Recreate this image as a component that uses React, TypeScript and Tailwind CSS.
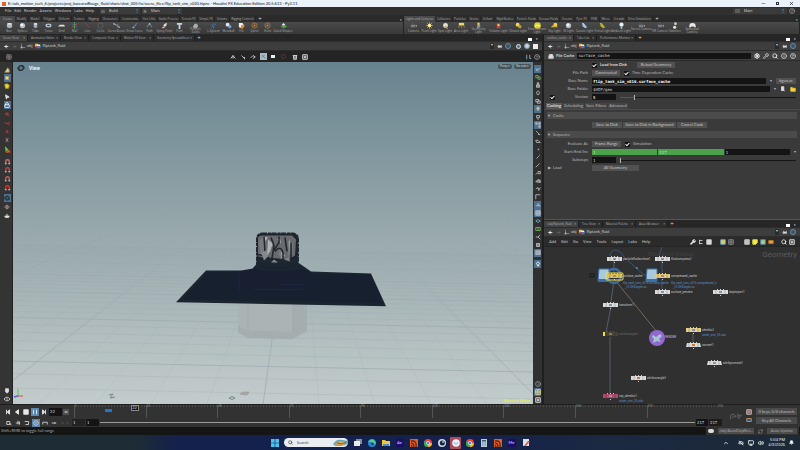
import type { ReactNode } from "react";
import {
  ArrowLeft,
  ArrowRight,
  Bell,
  Check,
  ChevronUp,
  Grid3x3,
  Info,
  CircleHelp,
  List,
  Lock,
  Minus,
  Monitor,
  MousePointer2,
  Pin,
  RefreshCw,
  Search,
  Settings,
  Volume2,
  Wrench,
  X,
} from "lucide-react";

const CREATE_TABS: [string, string][] = [
  ["Create", "w-[15px]"],
  ["Modify", "w-[14px]"],
  ["Model", "w-[13px]"],
  ["Polygon", "w-[15px]"],
  ["Deform", "w-[15px]"],
  ["Texture", "w-[15px]"],
  ["Rigging", "w-[14px]"],
  ["Characters", "w-[19px]"],
  ["Constraints", "w-[21px]"],
  ["Hair Utils", "w-[17px]"],
  ["Guide Process", "w-[22px]"],
  ["Terrain FX", "w-[18px]"],
  ["Simple FX", "w-[17px]"],
  ["Volume", "w-[15px]"],
  ["Rigging Controls", "w-[26px]"],
];

const LIGHT_TABS: [string, string][] = [
  ["Lights and Cameras", "w-[31px]"],
  ["Collisions", "w-[18px]"],
  ["Particles", "w-[15px]"],
  ["Grains", "w-[13px]"],
  ["Vellum", "w-[14px]"],
  ["Rigid Bodies", "w-[21px]"],
  ["Particle Fluids", "w-[22px]"],
  ["Viscous Fluids", "w-[22px]"],
  ["Oceans", "w-[15px]"],
  ["Pyro FX", "w-[14px]"],
  ["FEM", "w-[11px]"],
  ["Wires", "w-[12px]"],
  ["Crowds", "w-[15px]"],
  ["Drive Simulation", "w-[26px]"],
];

type Shape =
  | "box" | "ball" | "tube" | "torus" | "grid" | "null" | "line" | "circle"
  | "curve" | "pen" | "path" | "spray" | "font" | "solid" | "tree" | "meta"
  | "flame" | "spiral" | "shapes" | "camera" | "sun" | "lamp" | "area"
  | "geo" | "volume" | "env" | "sky" | "beam" | "bulb" | "switch" | "pad";

const CREATE_TOOLS: [string, Shape, string][] = [
  ["Box", "box", "w-[14px]"],
  ["Sphere", "ball", "w-[13px]"],
  ["Tube", "tube", "w-[13px]"],
  ["Torus", "torus", "w-[13px]"],
  ["Grid", "grid", "w-[13px]"],
  ["Null", "null", "w-[13px]"],
  ["Line", "line", "w-[13px]"],
  ["Circle", "circle", "w-[13px]"],
  ["Curve Bezier", "curve", "w-[19px]"],
  ["Draw Curve", "pen", "w-[17px]"],
  ["Path", "path", "w-[13px]"],
  ["Spray Paint", "spray", "w-[17px]"],
  ["Font", "font", "w-[13px]"],
  ["Platonic Solids", "solid", "w-[19px]"],
  ["L-System", "tree", "w-[17px]"],
  ["Metaball", "meta", "w-[13px]"],
  ["File", "flame", "w-[13px]"],
  ["Spiral", "spiral", "w-[13px]"],
  ["Helix", "spiral", "w-[13px]"],
  ["Quick Shapes", "shapes", "w-[18px]"],
];

const LIGHT_TOOLS: [string, Shape, string][] = [
  ["Camera", "camera", "w-[15px]"],
  ["Point Light", "sun", "w-[16px]"],
  ["Spot Light", "lamp", "w-[16px]"],
  ["Area Light", "area", "w-[16px]"],
  ["Geometry Light", "geo", "w-[19px]"],
  ["Volume Light", "volume", "w-[21px]"],
  ["Distant Light", "meta", "w-[18px]"],
  ["Environment Light", "env", "w-[20px]"],
  ["Sky Light", "sky", "w-[15px]"],
  ["GI Light", "ball", "w-[13px]"],
  ["Caustic Light", "beam", "w-[19px]"],
  ["Portal Light", "beam", "w-[17px]"],
  ["Ambient Light", "bulb", "w-[20px]"],
  ["Stereo Camera", "camera", "w-[21px]"],
  ["VR Camera", "camera", "w-[16px]"],
  ["Switcher", "switch", "w-[14px]"],
  ["Gamepad Camera", "pad", "w-[20px]"],
];

function ToolGlyph({ shape, warm }: { shape: Shape; warm?: boolean }) {
  const body: Record<Shape, ReactNode> = {
    box: <><path d="M1 2l3-1 3 1v4l-3 1-3-1z" fill="#aeb9bf" /><path d="M1 2l3 1 3-1-3-1z" fill="#eef3f5" /></>,
    ball: <><circle cx="4" cy="4" r="3" fill="#b8c4ca" /><circle cx="3.300" cy="3.200" r="1.500" fill="#f2f6f7" /></>,
    tube: <><path d="M2 2v4q2 1.500 4 0V2z" fill="#9fb2bd" /><ellipse cx="4" cy="2" rx="2" ry="1" fill="#e8eef1" /></>,
    torus: <ellipse cx="4" cy="4" rx="2.700" ry="1.500" fill="none" stroke="#b9c7d0" strokeWidth="1.500" />,
    grid: <path d="M0 5l2-2h5l1 2z" fill="#d9dfe2" />,
    null: <><path d="M4 0v8" stroke="#4caf4f" /><path d="M1 6l6-4" stroke="#d44" /><path d="M1 2l6 4" stroke="#46d" /></>,
    line: <path d="M1 1l6 6" stroke="#8a4b4b" strokeWidth=".8" />,
    circle: <circle cx="4" cy="4" r="3" fill="none" stroke="#62686c" strokeWidth=".8" />,
    curve: <><path d="M0 2q3 0 4 2t4 2" fill="none" stroke="#d5dade" /><path d="M3 4l3-2v4z" fill="#5b86b5" /></>,
    pen: <><path d="M2 7l4-6 1 1-4 5z" fill="#5d88b8" /><path d="M1 7l2-2 1 1z" fill="#ddd" /></>,
    path: <><path d="M1 6l3-4 3 4" fill="none" stroke="#5d88b8" strokeWidth="1.200" /><circle cx="4" cy="2" r="1" fill="#d7bc4c" /></>,
    spray: <><path d="M1 7l3-5 3-1-1 3-3 3z" fill="#e6dfdf" /><path d="M1 7l2-3 1 1z" fill="#c44" /></>,
    font: <path d="M1 1h6v2H5v5H3V3H1z" fill="#c5d4dc" />,
    solid: <path d="M1 5l2-3 3 0 1 3-2 2H2z" fill="#a9acae" />,
    tree: <><path d="M4 8V3M4 5L1 3M4 4l3-2M1 7l6-5" stroke="#3f76a8" strokeWidth=".9" /><circle cx="4" cy="3" r="1.500" fill="#2d5f91" /></>,
    meta: <><circle cx="3" cy="3" r="2.200" fill={warm ? "#f3d94a" : "#dbe8f4"} /><circle cx="5.500" cy="5.300" r="1.900" fill={warm ? "#c9a522" : "#6ea2dd"} /></>,
    flame: <><path d="M1 1h4l2 3-3 3-3-1z" fill="#f0f0ea" /><path d="M4 3l4 1-3 4-2-2z" fill="#e08b32" /></>,
    spiral: <><circle cx="4" cy="4" r="3" fill="none" stroke="#b77a38" strokeWidth="1" /><circle cx="4" cy="4" r="1.200" fill="#c98f44" /></>,
    shapes: <><path d="M1 5l3-3 4 3-4 2z" fill="#49a651" /><path d="M2 3l2-2 2 2-2 1z" fill="#e9e9e2" /><path d="M1 6l2-1v2z" fill="#c33" /></>,
    camera: <><rect x="1" y="3" width="5" height="3" fill="#777e82" /><circle cx="3" cy="2" r="1.300" fill="#555" /><path d="M6 4l2-1v3z" fill="#999" /></>,
    sun: <><path d="M4 0v8M0 4h8M1 1l6 6M7 1L1 7" stroke="#d8be4d" strokeWidth=".7" /><circle cx="4" cy="4" r="2" fill="#fff0a0" /></>,
    lamp: <><circle cx="4" cy="4" r="2.800" fill="#e4e4da" /><path d="M4 4l3 3-1 1-3-3z" fill="#b99a3d" /></>,
    area: <><path d="M1 1h6v3H1z" fill="#efd857" /><path d="M1 4v3M4 4v3M7 4v3" stroke="#b9a24b" strokeWidth=".7" /></>,
    geo: <><path d="M2 7l1-5 3 1v3z" fill="#8a9bb5" /><circle cx="4" cy="2" r="1.400" fill="#eec453" /></>,
    volume: <><path d="M2 2q2-2 4 0v5H2z" fill="#cf3f34" /><circle cx="4" cy="3.500" r="1.300" fill="#f6cf58" /></>,
    env: <><circle cx="4" cy="4" r="3.800" fill="#d8cf35" /><path d="M1 5q3-3 6 0" fill="none" stroke="#fff" /></>,
    sky: <><circle cx="5" cy="3" r="2.200" fill="#f4d43f" /><path d="M0 6q2-4 4-1 2-1 4 1z" fill="#d9b33a" /></>,
    beam: <path d="M1 1h2l4 5-2 1-3-2z" fill={warm ? "#b9b42e" : "#a7c4e2"} />,
    bulb: <><circle cx="4" cy="3" r="2.400" fill="#e4f2f5" /><path d="M3 5h2v3H3z" fill="#9eb9c2" /></>,
    switch: <><circle cx="4" cy="2" r="1.600" fill="#ccc" /><circle cx="3" cy="6" r="1.800" fill="#e4e4e4" /></>,
    pad: <path d="M1 2q3-2 6 0l1 4H6L5 5H3L2 6H0z" fill="#e6e6e6" />,
  };
  return (
    <svg viewBox="0 0 8 8" className="size-[7px] shrink-0">
      {body[shape]}
    </svg>
  );
}

function Shelf({
  tabs,
  tools,
  warm,
}: {
  tabs: [string, string][];
  tools: [string, Shape, string][];
  warm?: boolean;
}) {
  return (
    <div className="min-w-0 border-r border-[#242424] bg-[#404040]">
      <div className="flex h-[7px] items-end bg-[#2a2a2a] text-[3px] text-[#b0b0b0]">
        {tabs.map(([name, w], i) => (
          <button
            key={name}
            className={`${w} h-[6px] shrink-0 whitespace-nowrap text-center ${
              i === 0 ? "bg-[#484848]" : "border-r border-[#242424] bg-[#2e2e2e]"
            }`}
          >
            {name}
          </button>
        ))}
        <button className="w-2 text-[6px] text-[#ddd]">+</button>
        <span className="ml-auto pr-px text-[#ddd]">▾</span>
      </div>
      <div className="flex h-3 items-start bg-linear-to-b from-[#4a4a4a] to-[#393939] pl-0.5 text-[3px] text-[#adadad]">
        {tools.map(([name, shape, w]) => {
          const twoLine = /^(Platonic|Geometry|Environment|Stereo|Gamepad)/.test(name);
          return (
            <button key={name} className={`${w} flex shrink-0 flex-col items-center`}>
              <ToolGlyph shape={shape} warm={warm && !name.startsWith("Caustic")} />
              <span className={twoLine ? "-mt-px text-center" : "whitespace-nowrap pt-px"}>{name}</span>
            </button>
          );
        })}
      </div>
    </div>
  );
}

function PaneTabs({ tabs }: { tabs: [string, string][] }) {
  return (
    <div className="flex h-[7px] items-end bg-[#262626] font-['Open_Sans','Liberation_Sans',sans-serif] text-[3px] text-[#b4b4b4]">
      {tabs.map(([name, w], i) => (
        <button
          key={name}
          className={`${w} flex h-[6px] shrink-0 items-center justify-between whitespace-nowrap border-r border-[#1d1d1d] pl-[3px] pr-0.5 ${
            i === 0 ? "bg-[#424242]" : "bg-[#2d2d2d]"
          }`}
        >
          {name}
          <span className="text-[#ccc]">×</span>
        </button>
      ))}
      <button className="w-2 text-[6px] text-[#ddd]">+</button>
      <span className="ml-auto flex items-center gap-1 pr-1 text-[#eee]">
        <i className="block h-[3px] w-1 bg-white" />▾
      </span>
    </div>
  );
}

function PathBar({ wide }: { wide?: boolean }) {
  return (
    <div className="flex h-[10px] items-center gap-[3px] border-y border-[#2c2c2c] bg-[#3d3d3d] px-1 text-[4px] text-[#cacaca]">
      <ArrowLeft className="size-[5px] text-white" strokeWidth={4} />
      <ArrowRight className="size-[5px] text-[#666]" strokeWidth={3} />
      <a href="#obj" className="flex items-center gap-px">
        <svg viewBox="0 0 8 8" className="size-[6px]">
          <path d="M2 1v5h5" fill="none" stroke="#8299ad" />
          <circle cx="2" cy="6" r="1.200" fill="#b3c3d0" />
        </svg>
        obj
      </a>
      <a href="#fluid" className="flex items-center gap-px">
        <svg viewBox="0 0 8 8" className="size-[6px]">
          <path d="M0 1h4v4H0z" fill="#e7c23a" />
          <path d="M3 2h4v4H3z" fill="#eee" />
          <path d="M1 4h3v3H1z" fill="#c93a31" />
          <path d="M4 4h3v3H4z" fill="#4079c9" />
        </svg>
        fliptank_fluid
      </a>
      <span className="ml-auto h-[6px] w-1 bg-[#2a2a2a] text-center">▾</span>
      <Pin className="size-[5px] rotate-90 text-[#ddd]" fill="#ddd" />
      <span className="size-[6px] rounded-full border border-[#6d8aa3] bg-[#3a526a]" />
      {wide && (
        <>
          <span className="ml-0.5 size-[5px] rounded-full border border-[#d6e1ea] bg-[#55748f]" />
          <span className="size-[6px] rounded-full border border-[#7b98b0] bg-[#c8d5df]" />
          <span className="size-[5px] bg-[#eeeeee]" />
        </>
      )}
    </div>
  );
}

function SideButton({ on, label, children }: { on?: boolean; label: string; children?: ReactNode }) {
  return (
    <button
      aria-label={label}
      className={`flex h-2 w-[7px] shrink-0 items-center justify-center ${on ? "bg-[#4f6f8c]" : ""}`}
    >
      {children}
    </button>
  );
}

function Glyph({ d, color = "#cfcfcf", fill = "none" }: { d: string; color?: string; fill?: string }) {
  return (
    <svg viewBox="0 0 8 8" className="size-[6px]">
      <path d={d} stroke={color} fill={fill} strokeWidth="1.200" />
    </svg>
  );
}

function SnapGlyph({ color }: { color: string }) {
  return (
    <svg viewBox="0 0 8 8" className="size-[7px]">
      <path d="M2 6V4a2 2 0 0 1 4 0v2" fill="none" stroke={color} strokeWidth="1.500" />
      <path d="M1 6h2v1H1zM5 6h2v1H5z" fill="#ddd" />
    </svg>
  );
}

function LeftTools() {
  return (
    <aside className="flex w-[13px] shrink-0 flex-col items-center border-r border-[#222] bg-[#343434] pb-px pl-0.5 pt-1">
      <SideButton label="Select objects"><Glyph d="M1 7h6V4L5 1 3 4z" color="#8f8a6c" fill="#e6d98a" /></SideButton>
      <SideButton label="Select geometry" on><Glyph d="M2 2h4v4H2z" color="#b5a065" fill="#eedb96" /></SideButton>
      <SideButton label="Select dynamics"><Glyph d="M1 2l3-1 3 2-1 4H2z" color="#b5a022" fill="#e9d63a" /></SideButton>
      <div className="h-[3px]" />
      <SideButton label="Arrow"><MousePointer2 className="size-[6px] rotate-12 text-white" fill="#ddd" /></SideButton>
      <SideButton label="Lock" on><Lock className="size-[6px] text-white" strokeWidth={3} /></SideButton>
      <div className="h-px" />
      <SideButton label="Move"><Glyph d="M2 3h4L4 6zM6 5l1 2" color="#c03a3e" fill="#7d2c30" /></SideButton>
      <div className="h-px" />
      <SideButton label="Rotate"><Glyph d="M1 3q3 4 6 0M6 5l1 2" color="#d03a32" /></SideButton>
      <div className="h-px" />
      <SideButton label="Scale"><Glyph d="M3 2h2v3H3zM6 6l1 1" color="#ac383c" fill="#5e2f33" /></SideButton>
      <SideButton label="Pose"><Glyph d="M2 2l4 4M6 2L2 6M4 1v6" color="#9d7a7a" /></SideButton>
      <div className="h-px" />
      <SideButton label="Handles">
        <svg viewBox="0 0 8 8" className="size-[7px]">
          <path d="M1 0l1 7 3-3z" fill="#6ec44e" />
          <path d="M2 8l3-4 3 3z" fill="#d8562c" />
        </svg>
      </SideButton>
      <div className="h-1" />
      <SideButton label="Snap grid"><SnapGlyph color="#c86f6f" /></SideButton>
      <SideButton label="Snap curve"><SnapGlyph color="#bb4848" /></SideButton>
      <div className="h-px" />
      <SideButton label="Snap point"><SnapGlyph color="#c86060" /></SideButton>
      <div className="h-px" />
      <SideButton label="Snap multi"><SnapGlyph color="#e03030" /></SideButton>
      <div className="h-[3px]" />
      <SideButton label="View tool" on><Glyph d="M1 3l3-2 3 2v3L4 7 1 5z" color="#20272d" fill="#40515e" /></SideButton>
      <div className="h-px" />
      <SideButton label="Render region"><Glyph d="M1 4q3-5 6 0-3 5-6 0M3 3h2v2H3z" color="#a38d8d" /></SideButton>
      <div className="h-px" />
      <SideButton label="Flipbook"><Glyph d="M1 4h6L6 6H2zM4 1v3" color="#cfd7d2" fill="#eee" /></SideButton>
      <div className="flex-1" />
      <SideButton label="Ghost"><Glyph d="M2 1h4v4L4 7 2 5z" fill="#ddd" /></SideButton>
      <SideButton label="Visibility"><Glyph d="M0 4q4-5 8 0-4 5-8 0M3 4h2" /></SideButton>
    </aside>
  );
}

const DISPLAY_TOOLS: [string, string, boolean][] = [
  ["Grid plane", "M1 6l6-3M1 3l3 4", true],
  ["Materials", "M1 2h3v3H1zM4 4h3v3H4z", false],
  ["Lock camera", "M2 4h4v3H2zM3 4V1h2v3", false],
  ["Headlight", "M2 3q2-4 4 0L5 6H3z", false],
  ["Shaded", "M1 2h4v3H1zM3 4h4v3H3z", false],
  ["Lighting", "M2 3q2-4 4 0L4 6z", true],
  ["High quality", "M2 2h4v3H2zM4 5v3", false],
  ["Guides", "M1 1h2v2H1zM5 5h2v2H5zM5 1h2v2H5z", true],
  ["Object name", "M1 1l5 5M4 6h3", false],
  ["Follow", "M1 3h3l3 3H2z", false],
  ["Points", "M4 4h1v1H4z", false],
  ["Normals", "M2 6l3-3M6 1v1", false],
  ["Vectors", "M1 7l5-5", false],
  ["Numbers", "M1 6l2-2M4 2h3v3H4z", false],
  ["Prims", "M1 5l3-3 3 1v3z", false],
  ["Hulls", "M1 4l3-2 1 4 2-4", false],
  ["Bounds", "M1 7V1h6", false],
  ["Profiles", "M1 5h3V2l3 4", true],
  ["Backgrounds", "M1 1h6v6H1zM1 4h6", true],
  ["Diamonds", "M1 4l3-2 3 2-3 2z", false],
  ["Field", "M1 2h6v4H1zM4 2v4", false],
  ["Connect", "M1 4h3l3-3M4 4l3 3", false],
  ["Stop", "M2 2h4v4H2z", false],
  ["Image", "M1 1h6v5H1zM2 5l3-3", true],
];

function DisplayTools() {
  return (
    <aside className="flex w-[9px] shrink-0 flex-col items-center bg-[#303030] pt-[3px]">
      {DISPLAY_TOOLS.map(([label, d, on], i) => (
        <SideButton key={label} label={label} on={on}>
          <Glyph
            d={d}
            color={i === 1 || i === 20 ? "#6fae55" : i === 5 ? "#e9c869" : i === 19 ? "#6ca5c4" : "#b3b7ba"}
            fill={on || i === 22 || i === 14 || i === 2 ? "#ffffff66" : "none"}
          />
        </SideButton>
      ))}
      <div className="h-[3px]" />
      <SideButton label="Drop pin" on><Glyph d="M2 3q2-4 4 0L4 7z" color="#fff" /></SideButton>
      <div className="flex-1" />
      <SideButton label="Info"><Info className="size-[6px] text-[#ccc]" /></SideButton>
      <SideButton label="Layout" on><Glyph d="M1 1h6v6H1zM4 1v6M1 4h6" color="#f1df91" /></SideButton>
      <SideButton label="Display options"><Glyph d="M1 1h6v6H1zM3 3h2v2H3z" color="#eee" /></SideButton>
    </aside>
  );
}

function Viewport() {
  // ground plane: one family fans out from the vanishing point, the other runs across
  const fan = Array.from({ length: 61 }, (_, i) => (i - 30) * 56);
  const across = Array.from({ length: 38 }, (_, i) => 130 + 4200 / (72 - i * 1.6));
  return (
    <div className="relative min-w-0 flex-1 overflow-hidden bg-linear-to-b from-[#67838f] via-[#94a5a9] via-45% to-[#c3cccc]">
      <svg viewBox="0 0 520 343" preserveAspectRatio="none" className="absolute inset-0 size-full">
        <defs>
          <linearGradient id="fade" x1="0" y1="0" x2="0" y2="1">
            <stop offset=".42" stopColor="#fff" stopOpacity="0" />
            <stop offset=".55" stopColor="#fff" stopOpacity=".5" />
            <stop offset="1" stopColor="#fff" stopOpacity=".85" />
          </linearGradient>
          <mask id="ground">
            <rect width="520" height="343" fill="url(#fade)" />
          </mask>
        </defs>
        <g mask="url(#ground)" stroke="#90a3a8" fill="none">
          {fan.map((dx, i) => (
            <path key={dx} d={`M285 95L${250 + dx} 343`} strokeWidth={i % 5 === 0 ? 0.7 : 0.2} />
          ))}
          {across.map((y, i) => (
            <path key={y} d={`M0 ${y - 5}L520 ${y + 6}`} strokeWidth={i % 5 === 0 ? 0.7 : 0.3} />
          ))}
        </g>
        <path d="M225 238h69v32l-15 8-44-1-10-6z" fill="#a4adaf" />
        <path d="M225 238h55v34l-45-1-10-6z" fill="#abb3b4" />
        <path d="M235 238v32M280 240v31l-45-1-10-5" fill="none" stroke="#9ba6a8" strokeWidth=".5" />
        <path
          d="M193 209h45l6-7V178q0-6 6-6h30q5 0 5 6v23l13 9 60 2 15 33-210-4z"
          fill="#1c2430"
        />
        <path d="M194 211l163 2 13 29-200-4z" fill="#17202e" />
        <path d="M225 210q35-9 72 0l4 10-6 12-72-1-3-10z" fill="#171f31" />
        <path d="M226 231v-20M240 228h50M268 223h22" stroke="#1d2742" strokeWidth="1" />
        <path d="M245 177q0-3 4-3h30l4 4-1 16-7 4-30-3z" fill="#686a6d" />
        <path d="M246 180l3-4 4 4 1 11-6 5zM275 180l5 1-1 12-4 1zM267 186l4 5-3 7-3-6z" fill="#77797b" />
        <path d="M250 175l5 1-3 4zM255 178l5 4-3 8-3 4zM268 190l4 4-3 4zM276 178l2 4-1 9zM264 178l3-1 1 5z" fill="#aeb2b5" />
        <path
          d="M251 175l1 15-2 9M258 176l3 8-2 13M266 175v6l-5 8M272 176l2 14M262 190q5-7 8 1v9M278 181v17M245 193l9 2 9 8M246 200h37"
          fill="none"
          stroke="#222831"
          strokeWidth="1.6"
        />
        <path d="M248 191l5-2 2 6-4 4zM271 198l5-2 1 4zM258 201l3-3 4 3z" fill="#85888b" />
        <rect x="244" y="172" width="41" height="36" rx="5" fill="none" stroke="#202630" strokeWidth="2" strokeDasharray="5 1 3 .5" />
        <path d="M96 334l4-1-3 4 5-1M216 337q3-3 6 0-3 3-6 0" fill="none" stroke="#758690" />
        <path d="M227 333l3-2h6l-2 3z" fill="#aaa9a6" stroke="#8b8c8b" strokeWidth=".5" />
        <path d="M5 335v-7" stroke="#54c451" />
        <path d="M5 335h5" stroke="#c9534d" />
        <path d="M5 335l-4 1" stroke="#4f63d2" strokeWidth="1.5" />
      </svg>
      <div className="absolute left-1 top-0.5 flex items-center gap-1 font-['Roboto',sans-serif] text-[5px] font-bold text-[#eef4f6]">
        <svg viewBox="0 0 8 8" className="size-2">
          <path d="M0 4l3-3 3 0 2 3-3 3-3 0z" fill="#26323a" />
          <path d="M2 4l2-2 2 2-2 2z" fill="#687d88" />
        </svg>
        View
      </div>
      <div className="absolute right-0.5 top-[2px] flex gap-0.5 text-[3px] text-[#d2dadd]">
        <button className="h-[5px] w-[14px] rounded-full bg-[#44525a]">Persp ▾</button>
        <button className="h-[5px] w-[17px] rounded-full bg-[#44525a]">No cam ▾</button>
      </div>
      <div className="absolute bottom-px right-[3px] font-['Open_Sans',sans-serif] text-[3px] font-bold text-[#e2ee4a]">Education Edition</div>
    </div>
  );
}

function ViewerBar() {
  return (
    <div className="flex h-[11px] items-center bg-[#242424] pl-1.5 pr-0.5">
      <Grid3x3 className="size-[6px] text-[#9a9a9a]" strokeWidth={2} />
      <div className="flex flex-1 items-center justify-center gap-1">
        <Glyph d="M1 6l3-4 3 4M4 2v4" />
        <Glyph d="M2 2l4 4M6 4v3" />
        <Glyph d="M1 5l3-3 3 2-3 2" />
        <span className="size-[7px] bg-[#a8bac5] p-px"><Glyph d="M1 1l5 5M5 1L1 5" color="#6c8291" /></span>
        <span className="h-[3px] w-1 bg-[#e9eef0]" />
        <span className="mx-0.5 size-[5px] rounded-full border border-[#5b3535]" />
        <Glyph d="M2 2h4v5H2zM1 2h6" fill="#888" />
        <Glyph d="M1 1h6v6H1zM3 3h2v2H3z" color="#eee" />
      </div>
      <Glyph d="M1 1v6M5 1v5h2" color="#8fa9c4" />
      <CircleHelp className="ml-0.5 size-[6px] text-[#ccc]" />
    </div>
  );
}

const MINI_BTN =
  "h-[6px] bg-[#515151] text-center text-[4px] text-[#c8c8c8] leading-none whitespace-nowrap";

function Tick({ id, label, bold }: { id: string; label?: string; bold?: boolean }) {
  return (
    <label htmlFor={id} className={`flex items-center gap-[3px] ${bold ? "font-bold text-[#ddd]" : ""}`}>
      <span className="relative size-[5px]">
        <input
          id={id}
          type="checkbox"
          defaultChecked
          aria-label={label ?? id}
          className="absolute inset-0 size-[5px] appearance-none bg-[#161616]"
        />
        <Check className="absolute inset-0 size-[5px] text-white" strokeWidth={5} />
      </span>
      {label}
    </label>
  );
}

function Field({ label, htmlFor, children }: { label?: string; htmlFor?: string; children: ReactNode }) {
  return (
    <div className="flex h-2 items-center gap-1">
      <label htmlFor={htmlFor} className="w-11 shrink-0 text-right">
        {label}
      </label>
      <div className="flex min-w-0 flex-1 items-center gap-1">{children}</div>
    </div>
  );
}

function Slider({ label, blue }: { label: string; blue?: boolean }) {
  return (
    <input
      type="range"
      aria-label={label}
      defaultValue={blue ? 8 : 0}
      className={`h-[5px] min-w-0 flex-1 appearance-none ${
        blue
          ? "bg-[linear-gradient(90deg,#315f94_8%,#151515_8%)]"
          : "bg-[linear-gradient(#151515,#151515)]"
      } bg-[length:100%_1px] bg-center bg-no-repeat [&::-webkit-slider-thumb]:h-[5px] [&::-webkit-slider-thumb]:w-px [&::-webkit-slider-thumb]:appearance-none [&::-webkit-slider-thumb]:bg-[#b5b5b5]`}
    />
  );
}

const BOX = "h-[6px] min-w-0 bg-[#141414] px-px font-['DejaVu_Sans_Mono',monospace] text-[4px] text-[#dcdcdc] leading-none outline-none";

function Parameters() {
  return (
    <section className="flex flex-[169] basis-0 flex-col overflow-hidden bg-[#3a3a3a] text-[4px] text-[#b8b8b8]">
      <div className="flex h-[10px] items-center gap-[3px] border-b border-[#2b2b2b] bg-[#404040] px-1 text-[#d5d5d5]">
        <Glyph d="M1 5l1-3h4l1 3v2H1z" fill="#ddd" />
        <label htmlFor="node" className="-ml-px whitespace-nowrap font-bold">File Cache</label>
        <input id="node" defaultValue="surface_cache" className={`${BOX} flex-1`} />
        <Settings className="size-[6px] text-white" strokeWidth={4} />
        <Wrench className="size-[6px]" strokeWidth={3} />
        <Search className="size-[6px]" strokeWidth={4} />
        <Info className="size-[6px]" strokeWidth={3} />
        <CircleHelp className="size-[6px]" strokeWidth={3} />
      </div>
      <div className="pr-1">
        <Field>
          <Tick id="load-disk" label="Load from Disk" bold />
          <button className={`${MINI_BTN} ml-1.5 w-[38px]`}>Reload Geometry</button>
        </Field>
        <Field label="File Path" htmlFor="file-path">
          <select id="file-path" className={`${MINI_BTN} w-[28px] appearance-none`}>
            <option>Constructed</option>
          </select>
          <Tick id="time-dep" label="Time Dependent Cache" />
        </Field>
        <Field label="Base Name" htmlFor="base-name">
          <input id="base-name" defaultValue="flip_tank_sim_v016.surface_cache" className={`${BOX} flex-1 font-bold text-white`} />
          <span>▾</span>
          <select aria-label="File type" className={`${MINI_BTN} w-5 appearance-none`}>
            <option>bgeo.sc</option>
          </select>
        </Field>
        <Field label="Base Folder" htmlFor="base-folder">
          <input id="base-folder" defaultValue="$HIP/geo" className={`${BOX} flex-1`} />
          <span>▾</span>
          <Glyph d="M2 1h3v5H2zM4 4l2 3" color="#ddd" fill="#ddd" />
          <Glyph d="M1 2h2l1 1h3v4H1z" color="#e6c52c" fill="#f2d63d" />
        </Field>
        <div className="flex items-center">
          <div className="-mr-3 ml-1.5 w-1.5"><Tick id="use-version" /></div>
          <div className="flex h-2 flex-1 items-center gap-1">
            <label htmlFor="version" className="w-11 text-right">Version</label>
            <input id="version" defaultValue="5" className={`${BOX} w-6 font-bold`} />
            <Slider label="Version" blue />
          </div>
        </div>
      </div>
      <div className="flex h-2 items-end gap-px px-0.5">
        {["Caching", "Scheduling", "Save Filters", "Advanced"].map((t, i) => (
          <button key={t} className={`h-[6px] px-px ${i === 0 ? "bg-[#5a5a5a] text-white" : "bg-[#454545]"}`}>
            {t}
          </button>
        ))}
      </div>
      <div className="border-t border-[#4a4a4a] px-[3px] pt-0.5">
        <h3 className="flex h-[7px] items-center gap-0.5 bg-[#4b4b4b]"><span>▼</span>Cache</h3>
        <div className="flex h-3 items-center gap-px pl-[45px]">
          <button className={`${MINI_BTN} w-[30px]`}>Save to Disk</button>
          <button className={`${MINI_BTN} w-[53px]`}>Save to Disk in Background</button>
          <button className={`${MINI_BTN} w-[30px]`}>Cancel Cook</button>
        </div>
        <h3 className="flex h-[7px] items-center gap-0.5 bg-[#4b4b4b]"><span>▼</span>Sequence</h3>
      </div>
      <div className="pr-1 pt-0.5">
        <Field label="Evaluate As" htmlFor="evaluate">
          <select id="evaluate" className={`${MINI_BTN} w-[29px] appearance-none`}>
            <option>Frame Range</option>
          </select>
          <Tick id="simulation" label="Simulation" />
        </Field>
        <Field label="Start/End/Inc" htmlFor="start">
          <input id="start" defaultValue="1" className={`${BOX} flex-1 bg-[#4aa24a]!`} />
          <input aria-label="End" defaultValue="217" className={`${BOX} -ml-[3px] flex-1 bg-[#4aa24a]!`} />
          <input aria-label="Increment" defaultValue="1" className={`${BOX} -ml-[3px] flex-1`} />
          <span>▾</span>
        </Field>
        <Field label="Substeps" htmlFor="substeps">
          <input id="substeps" defaultValue="1" className={`${BOX} w-6 shrink-0`} />
          <Slider label="Substeps" />
        </Field>
        <div className="flex h-2 items-center">
          <span className="flex w-12 items-center gap-0.5 pl-1">
            <span>▶</span>
            <label htmlFor="load">Load</label>
          </span>
          <select id="load" className={`${MINI_BTN} w-[47px] appearance-none`}>
            <option>All Geometry</option>
          </select>
        </div>
      </div>
    </section>
  );
}

type NodeItem = { name: string; x: number; y: number; fill?: string; note?: string; dim?: boolean; slanted?: boolean };

const NODES: NodeItem[] = [
  { name: "particlefluidsurface1", x: 63, y: 9 },
  { name: "fluidcompress1", x: 111, y: 9 },
  { name: "surface_cache", x: 63, y: 26, fill: "#e3bf55", note: "flip_tank_sim_v016.surface_cache" },
  { name: "compressed_cache", x: 111, y: 26, fill: "#e8c878", note: "flip_tank_sim_v016.compressed_c" },
  { name: "surface_preview", x: 111, y: 42 },
  { name: "dopimport1", x: 169, y: 42 },
  { name: "transform1", x: 59, y: 55 },
  { name: "attribwrangle2", x: 59, y: 84, fill: "#46443a", dim: true },
  { name: "alembic1", x: 142, y: 80, fill: "#e5cf91", note: "water_sim_05.abc" },
  { name: "convert1", x: 142, y: 95, slanted: true },
  { name: "attribpromote1", x: 163, y: 113, slanted: true },
  { name: "attribwrangle1", x: 87, y: 128 },
  { name: "rop_alembic1", x: 59, y: 146, fill: "#b5486c", note: "water_sim_05.abc" },
];

function NetworkNode({ name, x, y, fill = "#dcdcdc", note, dim, slanted }: NodeItem) {
  const cache = name.endsWith("_cache");
  return (
    <div className="absolute flex items-start gap-px whitespace-nowrap text-[3px]" style={{ left: x, top: y }}>
      <svg viewBox="0 0 15 7" className="h-[7px] w-[15px] shrink-0">
        <path d="M4 0h1v1H4zM7 0h1v1H7zM10 0h1v1h-1zM7 6h1v1H7z" fill={dim ? "#555" : "#ccc"} />
        <path d={slanted ? "M1 1h13l1 4H0z" : "M0 1h15v4H0z"} fill={fill} />
        <path d="M3 1v4M12 1v4" stroke="#0005" strokeWidth=".6" />
        <path d="M6 2h3v2H6z" fill={dim ? "#8b7b35" : name.includes("wrangle") || name === "convert1" ? "#c97b3a" : "#8196aa"} />
        {dim && <path d="M0 1h2v4H0z" fill="#f2e22e" />}
      </svg>
      <div className={`pt-0.5 ${dim ? "text-[#6a6a6a]" : "text-[#c8c8c8]"}`}>
        <p>{name}</p>
        {note && <p className={`${cache ? "pt-1" : "pt-0.5"} text-[#5e8cc8]`}>{note}</p>}
        {cache && <p className="pl-0.5 pt-px text-[#5e8cc8]">_v5.$F4.bgeo.sc</p>}
      </div>
    </div>
  );
}

function Network() {
  return (
    <div className="relative min-h-0 flex-[157] basis-0 overflow-hidden bg-[#303030] font-['Roboto','Liberation_Sans',sans-serif]">
      <svg className="absolute inset-0 size-full" fill="none">
        <path d="M66 9q1-6 5-6 5 0 9 7l20 18 11 1M118 0l-3 9M118 14v13M118 33v9" stroke="#3e5f86" strokeWidth=".8" />
        <path d="M70 14v13M70 33l-3 22M67 60l-5 25M66 91v56M149 86v9" stroke="#5a6a76" strokeWidth=".8" />
        <path d="M71 33l42 52" stroke="#80786b" strokeWidth=".8" />
        <circle cx="93" cy="21" r="1" fill="#4a90c8" />
        <circle cx="70" cy="29" r="7" stroke="#3d6ba5" strokeWidth="2.5" />
        {[54, 102].map((x) => (
          <g key={x}>
            <path d={`M${x + 1} 22h10v12h-11z`} fill="#a9c8da" stroke="#3a74ae" />
            <path d={`M${x} 32h11v3H${x}z`} fill="#3a70a6" />
          </g>
        ))}
        <rect x="62" y="26" width="17" height="7" rx="1" stroke="#f5e342" strokeWidth="1" />
        <rect x="46" y="27" width="4" height="3" stroke="#191919" />
        <circle cx="113" cy="91" r="8" fill="#9168ce" />
        <path d="M109 88l3 2 4-3 2 2-3 3 2 3-4-1-4 2 1-4-2-2z" fill="#a4c5d0" />
      </svg>
      {NODES.map((n) => (
        <NetworkNode key={n.name} {...n} />
      ))}
      <span className="absolute left-[121px] top-[89px] text-[3px] text-[#c8b9e0]">RENDER</span>
      <span className="absolute left-[104px] top-1 text-[6px] text-[#414141]">Education Edition</span>
      <span className="absolute right-[3px] top-1 text-[8px] text-[#5d5d5d]">Geometry</span>
    </div>
  );
}

function NetworkMenu() {
  return (
    <div className="flex h-[10px] items-center border-b border-[#242424] bg-[#2b2b2b] px-[5px] font-['Roboto','Liberation_Sans',sans-serif] text-[4px] text-[#c4c4c4]">
      <nav className="flex gap-[5px]">
        {["Add", "Edit", "Go", "View", "Tools", "Layout", "Labs", "Help"].map((m) => (
          <button key={m}>{m}</button>
        ))}
      </nav>
      <div className="ml-auto flex items-center gap-0.5">
        <Wrench className="size-[6px] text-white" fill="#eee" />
        <Glyph d="M2 1v6M2 2h4M2 6h4" />
        <Glyph d="M1 1h6v6H1z" fill="#ddd" />
        <span className="w-1" />
        <Glyph d="M1 1h6v6H1z" color="#6aa5c9" fill="#e3d064" />
        <Glyph d="M1 1h6v6H1zM1 4h6M4 1v6" color="#909090" />
        <span className="w-1.5" />
        <Glyph d="M1 1h6v6H1zM2 6l3-3" fill="#bbb" />
        <Glyph d="M1 1h6v4L5 7H1z" color="#e5d93a" fill="#f4ea4b" />
        <Glyph d="M1 1h6v6H1z" color="#4e91b9" fill="#b7cf79" />
        <Glyph d="M1 2h6v4H1z" color="#b57628" fill="#e5a13c" />
        <span className="w-[3px]" />
        <Search className="size-[6px] text-white" strokeWidth={3} />
        <Glyph d="M1 1h6v6H1zM3 3h2v2H3z" color="#eee" />
      </div>
    </div>
  );
}

const RULER = ["1", "24", "48", "72", "96", "120", "144", "168", "192"];

function Playbar() {
  const icons = ["M2 1v6M6 1L3 4l3 3z", "M6 1L2 4l4 3z", "M1 1h6v6H1z", "M2 1v6M6 1v6", "M2 1l3 3-3 3zM6 1v6"];
  return (
    <footer className="flex h-[23px] shrink-0 border-t border-[#1e1e1e] bg-[#323232] text-[4px] text-[#c0c0c0]">
      <div className="flex min-w-0 flex-1 flex-col">
        <div className="flex h-[13px] items-center">
          <div className="flex w-[72px] items-center gap-px pl-1">
            {icons.map((d, i) => (
              <button key={d} aria-label={["First", "Reverse", "Stop", "Pause", "Last"][i]} className={`flex size-2 items-center justify-center ${i === 3 ? "bg-[#5b86ad]" : ""}`}>
                <Glyph d={d} color="#e8e8e8" fill={i === 3 ? "none" : "#e8e8e8"} />
              </button>
            ))}
            <input aria-label="Frame" defaultValue="22" className={`${BOX} h-2! w-[13px] shrink-0`} />
            <button className="h-[6px] bg-[#505050] px-px">◂▸</button>
          </div>
          <div className="relative flex h-full flex-1 pl-0.5">
            {RULER.map((f) => (
              <div key={f} className="flex-1 border-l border-[#555] bg-[repeating-linear-gradient(90deg,#4b4b4b_0_1px,transparent_1px_3px)] bg-[length:100%_2px] bg-[0_7px] bg-no-repeat text-[3px] text-[#8b8b8b]">
                {f}
              </div>
            ))}
            <span className="w-1 text-[3px] text-[#8b8b8b]">216</span>
            <span className="absolute left-[5%] top-[4px] h-[3px] w-[7px] bg-[#2076cb]" />
            <span className="absolute left-[9%] top-0 w-2 border border-[#8a8a8a] bg-[#161616] text-center text-[4px] text-[#ddd]">22</span>
          </div>
        </div>
        <div className="flex h-[9px] items-center gap-px pl-[5px]">
          {["M1 2h4v4H1zM5 4l2 3", "M4 1v5M1 4h5M6 2v4", "M1 2h5v4H2", "M4 1a3 3 0 1 0 .1 0M3 4h2", "M1 6V3h6v3", "M1 4h6M5 3v2"].map((d, i) => (
            <button key={d} aria-label={`Playback option ${i + 1}`} className={`flex size-2 items-center justify-center ${i === 3 ? "bg-[#5b86ad]" : ""}`}>
              <Glyph d={d} />
            </button>
          ))}
          <span className="w-3 text-center text-[#555]">▸ ◂</span>
          <input aria-label="Range start" defaultValue="1" className={`${BOX} h-[7px]! w-[13px] bg-[#222]!`} />
          <input aria-label="Range view start" defaultValue="1" className={`${BOX} h-[7px]! w-[13px]`} />
          <div className="h-px flex-1 bg-[#9c9c9c]" />
          <input aria-label="Range view end" defaultValue="217" className={`${BOX} h-[7px]! w-[12px]`} />
          <input aria-label="Range end" defaultValue="217" className={`${BOX} h-[7px]! w-[13px] bg-[#1c1c1c]!`} />
        </div>
      </div>
      <div className="flex w-[78px] items-center gap-1 pl-1.5 pr-[3px]">
        <svg viewBox="0 0 16 8" className="h-[7px] w-[14px]">
          <path d="M3 7V3l3-2 3 3-4 1M11 2l4 1-3 3z" fill="none" stroke="#5c5c5c" strokeWidth="1.2" />
        </svg>
        <span className="flex w-[6px] flex-col gap-0.5">
          <Glyph d="M1 1h6v6H1zM2 5l3-2" color="#c9c9c9" fill="#8f5d52" />
          <Glyph d="M1 2h6v4H1z" color="#b9955a" fill="#33568a" />
        </span>
        <span className="flex flex-1 flex-col gap-0.5 whitespace-nowrap">
          <button className="h-[7px] bg-[#4b4b4b]">0 keys, 0/0 channels</button>
          <button className="h-[7px] bg-[#4b4b4b]">Key All Channels</button>
        </span>
      </div>
    </footer>
  );
}

function TaskIcon({ name }: { name: string }) {
  const art: Record<string, ReactNode> = {
    windows: <path d="M0 0h3.700v3.700H0zM4.300 0H8v3.700H4.300zM0 4.300h3.700V8H0zM4.300 4.300H8V8H4.300z" fill="#4cc2f1" />,
    view: <><path d="M2 0h6v5H2z" fill="#8b9096" /><path d="M0 2h6v5H0z" fill="#e8eaec" /></>,
    edge: <><circle cx="4" cy="4" r="4" fill="#2387d0" /><path d="M0 3q4-6 8 1-1 2-4 1 1-3-4-2z" fill="#56cf8e" /><circle cx="4.500" cy="4.700" r="1.300" fill="#153d6b" /></>,
    files: <><path d="M0 1h3l1 1h4v5H0z" fill="#f3c640" /><path d="M1 5h6v2H1z" fill="#4390d0" /></>,
    houdini: <><path d="M0 0h8v8H0z" fill="#e45f2b" /><path d="M1 2q6-1 5 6M1 4q3 0 3 4M1 6q1 0 1 2" fill="none" stroke="#3b1d14" strokeWidth="1.100" /></>,
    chrome: <><circle cx="4" cy="4" r="4" fill="#e74335" /><path d="M4 4L0 2a4 4 0 0 0 4 6z" fill="#34a553" /><path d="M4 4h4a4 4 0 0 1-4 4z" fill="#fbbd05" /><circle cx="4" cy="4" r="1.700" fill="#4285f4" stroke="#fff" strokeWidth=".6" /></>,
    c4d: <><circle cx="4" cy="4" r="4" fill="#cfd8e4" /><circle cx="4.300" cy="4" r="2.500" fill="#17223d" /><circle cx="5" cy="3" r="1" fill="#a9b8d0" /></>,
    chat: <><circle cx="4" cy="4" r="3.800" fill="#e9f2f7" /><path d="M2.500 3v1.500q1.500 1.500 3 0V3" stroke="#6aaed6" fill="none" strokeWidth=".8" /></>,
    calc: <><path d="M1 0h6v8H1z" fill="#bdcbd6" /><path d="M2 1h4v1.500H2z" fill="#3a5a73" /><path d="M2 4h4M2 6h4" stroke="#4e90c4" strokeDasharray="1 .5" /></>,
    snip: <><path d="M1 0h6v7H1z" fill="#dce2ea" /><path d="M2 7l4-5 2 0-4 5z" fill="#d9573e" /></>,
  };
  const box = name === "chat" ? "h-3 w-[11px] -mx-px rounded-[1px] bg-[#b04b56]" : "h-full w-[9px]";
  return (
    <button aria-label={name} className={`${box} flex items-center justify-center`}>
      {name === "Ae" || name === "Me" ? (
        <span className="size-2 rounded-[1px] bg-[#1c0c63] pt-0.5 text-center text-[4px] font-bold text-[#b9a6ff]">{name}</span>
      ) : (
        <svg viewBox="0 0 8 8" className="size-2">{art[name]}</svg>
      )}
    </button>
  );
}

function Taskbar() {
  const apps = ["view", "edge", "files", "Ae", "houdini", "chrome", "c4d", "chat", "chrome", "calc", "houdini", "Me", "snip"];
  return (
    <footer className="relative flex h-[15px] shrink-0 items-center justify-center gap-[5px] bg-[linear-gradient(90deg,#1e2c36_17%,#14214c_22%,#14214c_60%,#1b2942_75%,#1d2936)] text-white">
      <TaskIcon name="windows" />
      <label className="flex h-[9px] w-16 items-center gap-1 rounded-full bg-[#e9edf2] pl-1 text-[#333]">
        <Search className="size-[5px]" strokeWidth={3} />
        <input placeholder="Search" aria-label="Search" className="w-8 text-[4px] leading-none outline-none placeholder:text-[#444]" />
        <svg viewBox="0 0 16 7" className="h-[7px] w-4">
          <path d="M0 5q4-6 10-4l6 1v3q-6 3-14 2z" fill="#6aa5b8" />
          <path d="M2 5q5-5 11-2l-2 3H3z" fill="#d9a753" />
          <path d="M4 4l5 1 5-2" stroke="#735a45" fill="none" />
        </svg>
      </label>
      {apps.map((a, i) => (
        <TaskIcon key={i} name={a} />
      ))}
      <div className="absolute inset-y-0 right-1.5 flex items-center gap-1 font-['Open_Sans',sans-serif] text-[4px]">
        <ChevronUp className="size-[6px]" strokeWidth={3} />
        <span className="w-px" />
        <Glyph d="M1 5q0-3 3-3t3 3zM1 1l6 6" color="#ddd" />
        <Monitor className="size-[6px]" strokeWidth={3} />
        <Volume2 className="size-[6px]" strokeWidth={3} />
        <div className="flex flex-col gap-px text-right">
          <p>5:04 PM</p>
          <p>4/3/2026</p>
        </div>
        <Bell className="size-[5px]" fill="#fff" />
      </div>
    </footer>
  );
}

export default function App() {
  return (
    <div className="flex h-screen w-full flex-col overflow-hidden bg-[#2a2a2a] font-['Lato','Liberation_Sans',sans-serif] leading-none">
      <header className="flex h-[7px] shrink-0 items-center bg-[#eaf3f9] px-0.5 text-[4px] text-[#111]">
        <span className="mr-0.5 size-1 bg-[#e2622e]" />
        <h1 className="whitespace-nowrap">
          E:/ads_motion_tech_6/projects/proj_baccaratRouge_fluid/shots/shot_005/fx/scene_files/flip_tank_sim_v020.hipnc - Houdini FX Education Edition 20.5.613 - Py3.11
        </h1>
        <div className="ml-auto flex gap-[10px] pr-1">
          <Minus className="size-[5px]" />
          <span className="mt-px size-[3px] border border-[#333]" />
          <X className="size-[5px]" strokeWidth={3} />
        </div>
      </header>

      <div className="flex h-2 shrink-0 items-center bg-[#303030] px-[5px] font-['Roboto','Liberation_Sans',sans-serif] text-[4px] text-[#c2c2c2]">
        <nav className="flex gap-[3px]">
          {["File", "Edit", "Render", "Assets", "Windows", "Labs", "Help"].map((m) => (
            <button key={m}>{m}</button>
          ))}
        </nav>
        <div className="ml-1.5 flex h-[6px] w-10 items-center gap-1 bg-[#3b3b3b] px-px">
          <List className="size-[5px]" />
          <select aria-label="Desktop" className="w-7 appearance-none leading-none"><option>Build</option></select>
          <span>⋮</span>
        </div>
        <div className="ml-0.5 flex h-[6px] w-10 items-center gap-1 bg-[#3b3b3b] px-px">
          <Settings className="size-[5px]" />
          <select aria-label="Radial menu" className="w-7 appearance-none leading-none"><option>Main</option></select>
          <span>⋮</span>
        </div>
        <div className="ml-auto flex h-[6px] w-[54px] items-center gap-1 bg-[#3b3b3b] px-0.5">
          <span className="h-1 w-[5px] bg-[#5b5b5b]" />
          <select aria-label="Take" className="w-9 appearance-none leading-none"><option>Main</option></select>
          <span>⋮</span>
        </div>
        <CircleHelp className="ml-0.5 size-[6px]" />
      </div>

      <div className="grid shrink-0 grid-cols-[101fr_99fr] font-['Open_Sans','Liberation_Sans',sans-serif]">
        <Shelf tabs={CREATE_TABS} tools={CREATE_TOOLS} />
        <Shelf tabs={LIGHT_TABS} tools={LIGHT_TOOLS} warm />
      </div>

      <main className="flex min-h-0 flex-1 gap-0.5 bg-[#1f1f1f]">
        <section className="flex min-w-0 flex-[542] basis-0 flex-col">
          <PaneTabs
            tabs={[
              ["Scene View", "w-[28px]"],
              ["Animation Editor", "w-[33px]"],
              ["Render View", "w-[28px]"],
              ["Composite View", "w-[32px]"],
              ["Motion FX View", "w-[33px]"],
              ["Geometry Spreadsheet", "w-[41px]"],
            ]}
          />
          <PathBar wide />
          <ViewerBar />
          <div className="flex min-h-0 flex-1">
            <LeftTools />
            <Viewport />
            <DisplayTools />
          </div>
        </section>

        <aside className="flex min-w-0 flex-[256] basis-0 flex-col">
          <PaneTabs
            tabs={[
              ["surface_cache", "w-[30px]"],
              ["Take List", "w-[23px]"],
              ["Performance Monitor", "w-[39px]"],
            ]}
          />
          <PathBar />
          <Parameters />
          <div className="h-px bg-[#555]" />
          <PaneTabs
            tabs={[
              ["/obj/fliptank_fluid", "w-[35px]"],
              ["Tree View", "w-[24px]"],
              ["Material Palette", "w-[33px]"],
              ["Asset Browser", "w-[32px]"],
            ]}
          />
          <PathBar />
          <NetworkMenu />
          <Network />
        </aside>
      </main>

      <Playbar />
      <div className="flex h-2 shrink-0 items-center bg-[#151515] px-px text-[4px] text-[#a8a8a8]">
        <span>Shift+RMB to toggle full range</span>
        <div className="ml-auto flex h-2 items-center gap-1 bg-[#303030] px-0.5">
          <span className="h-1 w-[6px] rounded-full bg-[#ddd]" />
          <button className="h-[6px] w-[36px] whitespace-nowrap bg-[#4b4b4b]">/obj/AutoDopNet…</button>
          <RefreshCw className="size-[5px]" />
          <button className="h-[6px] w-[30px] bg-[#4b4b4b]">Auto Update</button>
        </div>
      </div>
      <Taskbar />
    </div>
  );
}
